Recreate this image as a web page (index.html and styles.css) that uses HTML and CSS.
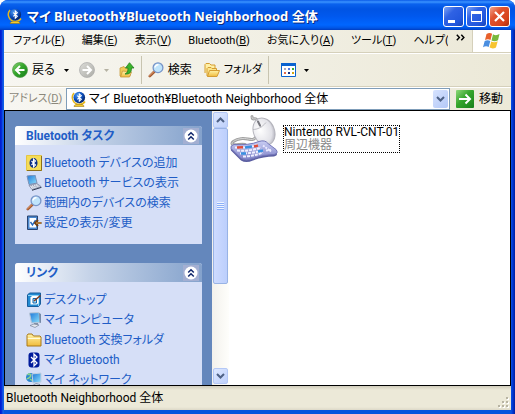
FILE: index.html
```html
<!DOCTYPE html>
<html lang="ja">
<head>
<meta charset="utf-8">
<title>マイ Bluetooth¥Bluetooth Neighborhood 全体</title>
<link rel="stylesheet" href="styles.css">
</head>
<body>
<svg class="defs" aria-hidden="true">
  <defs>
    <linearGradient id="greenBall" x1="0" y1="0" x2="1" y2="1"><stop offset="0" stop-color="#8fd97a"/><stop offset=".45" stop-color="#35a52b"/><stop offset="1" stop-color="#16801a"/></linearGradient>
    <linearGradient id="grayBall" x1="0" y1="0" x2="1" y2="1"><stop offset="0" stop-color="#dcdcd8"/><stop offset="1" stop-color="#acaca6"/></linearGradient>
    <linearGradient id="folderFill" x1="0" y1="0" x2="0" y2="1"><stop offset="0" stop-color="#fff3a8"/><stop offset="1" stop-color="#f0bb3c"/></linearGradient>
    <radialGradient id="globeFill" cx=".35" cy=".3" r=".8"><stop offset="0" stop-color="#4c9af0"/><stop offset=".5" stop-color="#0f50bd"/><stop offset="1" stop-color="#03184f"/></radialGradient>
    <linearGradient id="screenFill" x1="0" y1="0" x2="1" y2="1"><stop offset="0" stop-color="#1b74d8"/><stop offset="1" stop-color="#8fe3fb"/></linearGradient>
    <radialGradient id="mouseFill" cx=".35" cy=".4" r=".75"><stop offset="0" stop-color="#ffffff"/><stop offset=".7" stop-color="#e2e2e8"/><stop offset="1" stop-color="#a5a5b0"/></radialGradient>
    <linearGradient id="keyFill" x1="0" y1="0" x2="0" y2="1"><stop offset="0" stop-color="#c9cdf3"/><stop offset="1" stop-color="#7d80c6"/></linearGradient>
    <symbol id="globe" viewBox="0 0 16 16">
      <path d="M3 2A7 7 0 0 0 8 13.500Q12 13.500 14 10.500" fill="none" stroke="#e5b61c" stroke-width="1.500"/>
      <path d="M3 15.500c0-1.800 2-2.300 5-2.300s5 .5 5 2.300z" fill="#f3cb2e" stroke="#8a6508" stroke-width=".5"/>
      <circle cx="8.300" cy="6.500" r="5.800" fill="url(#globeFill)"/>
      <path d="M6.300 4.700 10.300 8.300 8.300 10.200V2.900l2 1.800-4 3.700" fill="none" stroke="#fff" stroke-width="1.100"/>
    </symbol>
    <symbol id="magnifier" viewBox="0 0 16 16">
      <path d="M6.500 9.500 1.800 14.200" stroke="#a35a30" stroke-width="2.600" stroke-linecap="round"/>
      <path d="M6 9.500 1.500 13.800" stroke="#e7a171" stroke-width="1" stroke-linecap="round"/>
      <circle cx="10" cy="5.700" r="4.900" fill="#bfe4fb" stroke="#7895c8" stroke-width="1.300"/>
      <path d="M7 5.500a3 3 0 0 1 3.500-2.700" fill="none" stroke="#fff" stroke-width="1.500"/>
    </symbol>
    <symbol id="folder" viewBox="0 0 16 16">
      <path d="M1 14V3.500l1-1.500h4l1.500 2H14l1 1v9z" fill="url(#folderFill)" stroke="#a87818"/>
      <path d="M1.800 6.500h12.500" stroke="#fffbd8"/>
    </symbol>
    <symbol id="chevrons" viewBox="0 0 16 16">
      <circle cx="8" cy="8" r="6.500" fill="#fff"/>
      <path d="M5.200 7.500 8 4.700l2.800 2.800M5.200 11.500 8 8.700l2.800 2.800" fill="none" stroke="#12286c" stroke-width="1.500"/>
    </symbol>
    <symbol id="caret" viewBox="0 0 5 3"><path d="M0 0h5L2.500 3z" fill="currentColor"/></symbol>
  </defs>
</svg>
<div class="window">
  <header class="titlebar">
    <svg class="icon16"><use href="#globe"/></svg>
    <h1>マイ Bluetooth¥Bluetooth Neighborhood 全体</h1>
    <div class="controls">
      <button class="control" aria-label="最小化"><svg viewBox="0 0 19 19"><path d="M4 13h7v3H4z" fill="#fff"/></svg></button>
      <button class="control" aria-label="最大化"><svg viewBox="0 0 19 19"><path d="M4.500 4.500h10v10h-10z" fill="none" stroke="#fff"/><path d="M4 4h11v3H4z" fill="#fff"/></svg></button>
      <button class="control close" aria-label="閉じる"><svg viewBox="0 0 19 19"><path d="m5 5 9 9m0-9-9 9" stroke="#fff" stroke-width="2.200"/></svg></button>
    </div>
  </header>

  <nav class="menubar">
    <div class="menus">
      <button>ファイル(<u>F</u>)</button>
      <button>編集(<u>E</u>)</button>
      <button>表示(<u>V</u>)</button>
      <button>Bluetooth(<u>B</u>)</button>
      <button>お気に入り(<u>A</u>)</button>
      <button>ツール(<u>T</u>)</button>
      <button>ヘルプ(</button>
    </div>
    <button class="more" aria-label="その他"><svg viewBox="0 0 8 6"><path d="m.7.500 2.300 2.500L.7 5.500m4-5L7 3 4.700 5.500" fill="none" stroke="#000" stroke-width="1.300"/></svg></button>
    <div class="brand">
      <svg viewBox="0 0 20 18">
        <path d="M4.500 2c2-1.300 4-1.200 5.600-.2L8.500 8C6.800 7 5 7 3 8z" fill="#e8602c"/>
        <path d="M11 2.300c2 1.200 4 1.200 6.500-.2L16 8.200c-2.300 1.300-4.500 1.200-6.500.200z" fill="#78b83c"/>
        <path d="M2.700 9c2-1.200 4-1.100 5.600 0L6.700 15c-1.700-1-3.700-1-5.700.2z" fill="#4a8ee0"/>
        <path d="M9.200 9.500c2 1.100 4.200 1.100 6.500-.2L14 15.500c-2.200 1.200-4.400 1.200-6.400.1z" fill="#f7c430"/>
      </svg>
    </div>
  </nav>

  <div class="toolbar">
    <button class="tool back"><svg class="icon16" viewBox="0 0 16 16"><circle cx="8" cy="8" r="7.500" fill="url(#greenBall)" stroke="#4d9a45" stroke-width=".7"/><path d="M12.500 8H4.500M8 4 4 8l4 4" fill="none" stroke="#fff" stroke-width="2"/></svg>戻る</button>
    <button class="drop" aria-label="戻る履歴"><svg><use href="#caret"/></svg></button>
    <button class="tool forward" aria-label="進む" disabled><svg class="icon16" viewBox="0 0 16 16"><circle cx="8" cy="8" r="7.500" fill="url(#grayBall)" stroke="#aaa" stroke-width=".7"/><path d="M3.500 8h8M8 4l4 4-4 4" fill="none" stroke="#fff" stroke-width="2"/></svg></button>
    <button class="drop" aria-label="進む履歴" disabled><svg><use href="#caret"/></svg></button>
    <button class="tool" aria-label="上へ"><svg class="icon16" viewBox="0 0 16 16"><path d="M1 14V6l4-1.500L6 6h5v8z" fill="#f2cb58" stroke="#c79a3d" stroke-width=".8"/><path d="m1.500 15 2-6 9 1-2 5z" fill="url(#folderFill)" stroke="#c7963a" stroke-width=".8"/><path d="M6 12c2.500-1 3-3 3-6H6.500L10.500.7 15 6h-2.500c0 4-1.500 6.500-6.500 6z" fill="#3bb52b" stroke="#267e22" stroke-width=".8"/></svg></button>
    <span class="divider"></span>
    <button class="tool search"><svg class="icon16"><use href="#magnifier"/></svg>検索</button>
    <button class="tool folders"><svg class="icon16" viewBox="0 0 16 16"><path d="M1 11V2.500l1-1h3.500l1.500 1.500h4v7" fill="#fff0a5" stroke="#d49c32"/><path d="M3 14V6.500l1-1h3l1 1h4.500V13z" fill="#fce58b" stroke="#d49c32"/><path d="m3.500 14.500 2-6H15.500l-2.500 6z" fill="url(#folderFill)" stroke="#d49c32"/></svg>フォルダ</button>
    <span class="divider"></span>
    <button class="tool view" aria-label="表示"><svg class="icon16" viewBox="0 0 16 16"><path d="M.5 1.500h14v13H.5z" fill="#fff" stroke="#0a62cf"/><path d="M0 1h15v3H0z" fill="#0a62cf"/><path d="M3 6h2v2H3z" fill="#aaa6be"/><path d="M7 6h2v2H7z" fill="#5479e0"/><path d="M11 6h2v2h-2z" fill="#39ab39"/><path d="M3 10h2v2H3z" fill="#e56b4b"/><path d="M7 10h2v2H7z" fill="#173180"/><path d="M11 10h2v2h-2z" fill="#d7a50e"/></svg></button>
    <button class="drop" aria-label="表示の種類"><svg><use href="#caret"/></svg></button>
  </div>

  <form class="addressbar">
    <label for="address">アドレス(<u>D</u>)</label>
    <div class="address">
      <svg class="icon16 address-icon"><use href="#globe"/></svg>
      <select id="address"><option>マイ Bluetooth¥Bluetooth Neighborhood 全体</option></select>
      <span class="address-arrow"><svg viewBox="0 0 9 6"><path d="m1 1 3.500 3.500L8 1" fill="none" stroke="#4d6185" stroke-width="2"/></svg></span>
    </div>
    <button class="go" type="button"><svg viewBox="0 0 18 18"><rect width="18" height="18" rx="1" fill="url(#greenBall)"/><path d="M3 9h11M9.500 4.500 14 9l-4.500 4.500" fill="none" stroke="#fff" stroke-width="2"/></svg>移動</button>
  </form>

  <main class="content">
    <aside class="sidebar">
      <section class="panel">
        <header><h2>Bluetooth タスク</h2><button aria-label="折りたたむ"><svg class="icon16"><use href="#chevrons"/></svg></button></header>
        <ul>
          <li><a href="#"><svg class="icon16" viewBox="0 0 16 16"><path d="M.5.500h15v15H.5z" fill="#f5dc58" stroke="#e3c545"/><path d="M15.500 1v14.500H1" fill="none" stroke="#8d701a"/><ellipse cx="7.500" cy="8" rx="4" ry="5" fill="#0a2d86"/><path d="m5.500 6 4 4-2 2V4l2 2-4 4" fill="none" stroke="#fff" stroke-width="1.100"/></svg>Bluetooth デバイスの追加</a></li>
          <li><a href="#"><svg class="icon16" viewBox="0 0 16 16"><path d="m1 1 8-1 2 8-8 1.500z" fill="url(#screenFill)" stroke="#7c92b8"/><path d="m3 10.500 8-2 4 3-9 3z" fill="#e4e7f0" stroke="#6f7a96" stroke-width=".7"/><path d="m5 10.800 6.500-1.200m-5 2.600 6.500-1.500" stroke="#8a93aa" stroke-dasharray="1 1"/><path d="m6 15.300 9.500-3" stroke="#30394f"/></svg>Bluetooth サービスの表示</a></li>
          <li><a href="#"><svg class="icon16"><use href="#magnifier"/></svg>範囲内のデバイスの検索</a></li>
          <li><a href="#"><svg class="icon16" viewBox="0 0 16 16"><path d="M1.500 1h10v13.500h-10z" fill="#4a89d0" stroke="#29436f"/><path d="M3.500 3h6.500v9.500H3.500z" fill="#fff"/><path d="m4.500 7 2 3 3-5" fill="none" stroke="#2167bd" stroke-width="1.400"/><path d="M15.500 8H9.500m2.500-3-3 3 3 3" fill="none" stroke="#704015" stroke-width="2"/><path d="M15 8h-5" stroke="#efad4e"/></svg>設定の表示/変更</a></li>
        </ul>
      </section>
      <section class="panel">
        <header><h2>リンク</h2><button aria-label="折りたたむ"><svg class="icon16"><use href="#chevrons"/></svg></button></header>
        <ul>
          <li><a href="#"><svg class="icon16" viewBox="0 0 16 16"><path d="m1.500 3 2-2h11v11l-2 2.500h-11z" fill="#238bd2" stroke="#185d9c"/><path d="M2 3.500h10.500V14" fill="none" stroke="#8ed2f5"/><path d="M4.500 5.500 6 4h6.500v7L11 12.500H4.500z" fill="#fff"/><path d="M10.500 6.500H7V11h3.500z" fill="#a8dcf6" stroke="#1468ae"/><path d="m8 9 6.500-5.500" stroke="#823b1e" stroke-width="1.500"/></svg>デスクトップ</a></li>
          <li><a href="#"><svg class="icon16" viewBox="0 0 16 16"><path d="M3.500 1 13 .500l1 10-8.500.5z" fill="url(#screenFill)" stroke="#b9c6d7"/><path d="m13 1 2 1v9l-1.500-.5z" fill="#758aa7"/><path d="M8 11h4v2H8z" fill="#8291a9"/><path d="m4 13.500 4-1.500 5 1-4 2.500z" fill="#e4e7ed" stroke="#79859c" stroke-width=".7"/></svg>マイ コンピュータ</a></li>
          <li><a href="#"><svg class="icon16"><use href="#folder"/></svg>Bluetooth 交換フォルダ</a></li>
          <li><a href="#"><svg class="icon16" viewBox="0 0 16 16"><rect x="2.500" y=".5" width="11" height="15" rx="3" fill="#001b9b"/><path d="m5 5 6 6-3 3V2l3 3-6 6" fill="none" stroke="#fff" stroke-width="1.300"/></svg>マイ Bluetooth</a></li>
          <li><a href="#"><svg class="icon16" viewBox="0 0 16 16"><circle cx="4.500" cy="5.500" r="4.500" fill="#2c87ce"/><path d="M1.500 3c2-2 3-1 3 1S2 6 1 7m3 0 3 2" fill="none" stroke="#8ed68b" stroke-width="1.500"/><path d="m6 2 9-1v9L7 11z" fill="url(#screenFill)" stroke="#c2cfdf"/><path d="m6 14 4-2.500 4 1-4 3z" fill="#dce2eb" stroke="#71809b" stroke-width=".7"/></svg>マイ ネットワーク</a></li>
        </ul>
      </section>
    </aside>
    <div class="scrollbar">
      <button class="scroll-button" aria-label="上にスクロール"><svg viewBox="0 0 9 6"><path d="M1 5 4.500 1.500 8 5" fill="none" stroke="#4d6185" stroke-width="2"/></svg></button>
      <div class="track"><div class="thumb"></div></div>
      <button class="scroll-button" aria-label="下にスクロール"><svg viewBox="0 0 9 6"><path d="m1 1 3.500 3.500L8 1" fill="none" stroke="#4d6185" stroke-width="2"/></svg></button>
    </div>
    <div class="files">
      <a class="device" href="#">
        <svg viewBox="0 0 48 48">
          <path d="M27 6c-1-4-5 1-5-4m5 18c-3 9-9 3-15 4-8 1-12 5-9 6s8-1 12 0" fill="none" stroke="#a2a2a2" stroke-width="3" stroke-linecap="round"/>
          <path d="M27 6c-1-4-5 1-5-4m5 18c-3 9-9 3-15 4-8 1-12 5-9 6" fill="none" stroke="#d4d4d4" stroke-width="1"/>
          <ellipse cx="34" cy="17" rx="10.500" ry="14" transform="rotate(-22 34 17)" fill="url(#mouseFill)" stroke="#b4b4bc"/>
          <path d="M23 15c4 0 9-2 13-7m-5 5-4-7" fill="none" stroke="#b0b0b8" stroke-width=".8"/>
          <path d="m28 7 2 4" stroke="#78787f" stroke-width="2" stroke-linecap="round"/>
          <path d="M1 36q-1-3 3-4 15 1 25-3 6-2 9 2l8 6q3 4-2 5-11 0-21 4-7 3-12 0z" fill="#5c5fa2"/>
          <path d="M1 34q-1-3 3-4 15 1 25-3 6-2 9 2l8 6q3 4-2 5-11 0-21 4-7 3-12 0z" fill="url(#keyFill)" stroke="#7477b9"/>
          <path d="M5 33q13 1 23-3M7 36q13 1 24-3M10 39q12 0 23-3M13 42q10 0 20-4" fill="none" stroke="#eeefff" stroke-width="2" stroke-dasharray="3 1"/>
          <path d="m7 33 6-.2m11-.8 4-1" stroke="#de4c3a" stroke-width="2.500"/>
          <path d="m15 33 7-1m-11 7h5m12-2 5-1" stroke="#398fe0" stroke-width="2.500"/>
          <path d="m33 31 8 6m-5-1 5-.5" stroke="#ebeaff" stroke-width="2" stroke-dasharray="2 1"/>
        </svg>
        <span class="device-label"><span>Nintendo RVL-CNT-01</span><span class="kind">周辺機器</span></span>
      </a>
    </div>
  </main>

  <footer class="statusbar"><span>Bluetooth Neighborhood 全体</span>
    <svg class="grip" viewBox="0 0 12 12"><path d="M9 1h2v2H9zM5 5h2v2H5zm4 0h2v2H9zM1 9h2v2H1zm4 0h2v2H5zm4 0h2v2H9z" fill="#fff"/><path d="M8 0h2v2H8zM4 4h2v2H4zm4 0h2v2H8zM0 8h2v2H0zm4 0h2v2H4zm4 0h2v2H8z" fill="#b8b4a3"/></svg>
  </footer>
</div>
</body>
</html>
```

FILE: styles.css
```css
* { box-sizing: border-box; }

body {
  margin: 0;
  background: #fff;
  color: #000;
  font: 12px/16px Roboto, "Noto Sans CJK JP", sans-serif;
  font-feature-settings: "palt";
}

button, select {
  margin: 0;
  padding: 0;
  border: 0;
  background: none;
  color: inherit;
  font: inherit;
  font-feature-settings: inherit;
  white-space: nowrap;
}

h1, h2, ul { margin: 0; padding: 0; }
svg { display: block; flex: none; }
.defs { position: absolute; width: 0; height: 0; }
.icon16 { width: 16px; height: 16px; }

.window {
  display: flex;
  flex-direction: column;
  height: 100vh;
  overflow: hidden;
  border-radius: 8px 8px 0 0;
  background: linear-gradient(90deg, #0019cf 0, #0831d9 2px, #166aee 3px, #0855dd 4px, #0855dd calc(100% - 4px), #0440e0 calc(100% - 3px), #001ea0 100%);
}

.titlebar {
  display: flex;
  align-items: center;
  gap: 4px;
  height: 30px;
  flex: none;
  padding: 2px 5px 0 7px;
  background: linear-gradient(#0a5ae8 0, #3a93ff 2px, #0a62ee 4px, #0054e3 9px, #0058ee 16px, #0066ff 25px, #0055e5 28px, #003dc0 30px);
}

.titlebar h1 {
  flex: 1;
  overflow: hidden;
  white-space: nowrap;
  color: #fff;
  font-family: "Noto Sans", "Noto Sans CJK JP", sans-serif;
  font-size: 13px;
  line-height: 20px;
  text-shadow: 1px 1px 0 #0a2a80;
}

.controls { display: flex; gap: 2px; }

.control {
  width: 21px;
  height: 21px;
  border: 1px solid #fff;
  border-radius: 3px;
  background: linear-gradient(135deg, #7ea4f5 0, #2f62e4 35%, #2257dd 75%, #1443b5 100%);
}

.control svg { width: 19px; height: 19px; }
.close { background: linear-gradient(135deg, #f1a38c 0, #e0532f 35%, #d7431c 75%, #a92e0c 100%); }

.menubar, .toolbar, .addressbar, .statusbar {
  display: flex;
  flex: none;
  align-items: center;
  margin: 0 4px;
  background: linear-gradient(90deg, #f7f6f1, #ece9d8);
}

.menubar { height: 23px; border-bottom: 1px solid #d5d0bb; font-size: 11px; }
.menus { display: flex; flex: 1; gap: 17px; padding-left: 9px; overflow: hidden; }
.more { width: 24px; height: 20px; padding: 0 8px; }
.more svg { width: 9px; height: 7px; margin-bottom: 8px; }

.brand {
  display: grid;
  place-items: center;
  align-self: stretch;
  width: 39px;
  border-left: 1px solid #d5d0bb;
  background: #fff;
}

.brand svg { width: 20px; height: 18px; }

.toolbar { height: 34px; padding-left: 8px; border-top: 1px solid #fff; border-bottom: 1px solid #d5d0bb; }
.tool { display: flex; align-items: center; gap: 4px; }
.drop { display: grid; place-items: center; width: 24px; height: 24px; }
.drop svg { width: 5px; height: 3px; }
.drop:disabled { color: #b5b2a3; }
.divider { align-self: stretch; width: 1px; margin: 2px 6px; background: #c8c4b0; }
.search { margin-right: 12px; }
.folders { font-size: 11px; }
.view { margin-left: 6px; }
.view + .drop { width: 20px; }

.addressbar { height: 23px; border-top: 1px solid #fff; }
.addressbar label { width: 62px; flex: none; padding-left: 5px; color: #8b887b; font-size: 11px; white-space: nowrap; }

.address {
  display: flex;
  flex: 1;
  align-self: stretch;
  position: relative;
  align-items: center;
  border: 1px solid #7f9db9;
  background: #fff;
}

.address-icon { position: absolute; left: 4px; pointer-events: none; }
.address select { flex: 1; height: 20px; min-width: 0; padding-left: 22px; appearance: none; }

.address-arrow {
  display: grid;
  place-items: center;
  position: absolute;
  top: 1px;
  right: 1px;
  bottom: 1px;
  width: 15px;
  border-radius: 2px;
  background: linear-gradient(135deg, #d7e3fe, #b3c8f7);
  pointer-events: none;
}

.address-arrow svg, .scroll-button svg { width: 9px; height: 6px; }
.go { display: flex; align-items: center; gap: 5px; padding: 0 8px 0 6px; }
.go svg { width: 18px; height: 18px; }

.content {
  display: flex;
  flex: 1;
  min-height: 0;
  margin: 0 4px;
  border: 1px solid #000;
  background: #fff;
}

.sidebar {
  width: 207px;
  flex: none;
  overflow: hidden;
  padding: 15px 10px 0;
  background: #6487bc;
}

.panel { margin-bottom: 19px; background: #d6dff7; border-radius: 3px 3px 0 0; }

.panel header {
  display: flex;
  align-items: center;
  justify-content: space-between;
  height: 19px;
  padding: 0 3px 0 11px;
  border-radius: 3px 3px 0 0;
  background: linear-gradient(90deg, #fff 0, #c5d3e8 40%, #84a2cc 100%);
}

.panel header button { background: #a3afd2; }
.panel h2 { color: #215dc6; font-size: 12px; line-height: 16px; }
.panel ul { padding: 8px 0 11px 11px; list-style: none; }
.panel a { display: flex; align-items: center; gap: 2px; height: 20px; color: #215dc6; text-decoration: none; white-space: nowrap; }

.scrollbar { display: flex; flex-direction: column; width: 17px; flex: none; padding: 1px; background: linear-gradient(90deg, #f3f1ec, #fefefb); }

.scroll-button {
  display: grid;
  place-items: center;
  width: 15px;
  height: 16px;
  flex: none;
  border: 1px solid #b4c8f6;
  border-radius: 2px;
  background: linear-gradient(135deg, #dde8ff, #bed0fb);
}

.track { flex: 1; }

.thumb {
  display: grid;
  place-items: center;
  height: 65%;
  border: 1px solid #98b3e5;
  border-radius: 2px;
  background: linear-gradient(90deg, #cddbff, #bccffc);
}

.thumb::before {
  content: "";
  width: 7px;
  height: 8px;
  background: repeating-linear-gradient(#eef4fe 0, #eef4fe 1px, #8cb0f8 1px, #8cb0f8 2px);
}

.files { flex: 1; min-width: 0; overflow: hidden; padding: 3px 1px; }
.device { display: flex; align-items: center; gap: 5px; color: #000; text-decoration: none; }
.device svg { width: 48px; height: 49px; }
.device-label { display: flex; flex-direction: column; border: 1px dotted #000; line-height: 13px; white-space: nowrap; }
.kind { color: #888; }

.statusbar {
  height: 24px;
  margin-bottom: 4px;
  padding-left: 2px;
  background: linear-gradient(#d0ccbb 0, #ece9d8 4px, #ece9d8 21px, #dcd8c7 100%);
}

.statusbar span { flex: 1; }
.grip { width: 12px; height: 12px; align-self: flex-end; margin: 0 1px 1px 0; }
```
